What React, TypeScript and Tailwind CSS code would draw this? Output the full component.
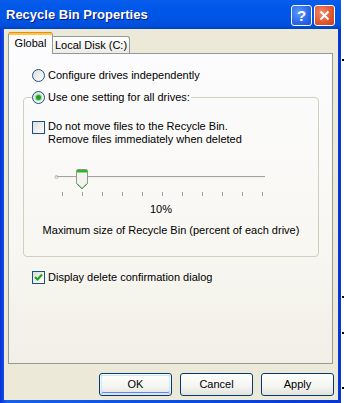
import React from 'react';

function Radio({ checked }: { checked?: boolean }) {
  return (
    <span className="w-[13px] h-[13px] rounded-full border border-[#1C5180] bg-[linear-gradient(135deg,#DCDCD7,#FFFFFF)] flex items-center justify-center shrink-0">
      {checked && <span className="w-[5px] h-[5px] rounded-full bg-[#21A121] shadow-[0_0_0_1px_#9ADF9A]" />}
    </span>
  );
}

function Check({ checked }: { checked?: boolean }) {
  return (
    <span className="w-[13px] h-[13px] border border-[#1C5180] bg-[linear-gradient(135deg,#DCDCD7,#FFFFFF)] flex items-center justify-center shrink-0">
      {checked && (
        <svg width="11" height="11" viewBox="0 0 11 11">
          <path d="M2 5 L4.5 7.5 L9 2.5" stroke="#21A121" strokeWidth="2" fill="none" />
        </svg>
      )}
    </span>
  );
}

function XpButton({ label, isDefault }: { label: string; isDefault?: boolean }) {
  return (
    <div className="w-[73px] h-[23px] rounded-[3px] border border-[#003C74] bg-[linear-gradient(180deg,#FFFFFF_0%,#F4F4F0_60%,#E3E2DA_100%)] p-[1px]">
      <div
        className={
          isDefault
            ? 'h-full rounded-[2px] shadow-[inset_0_0_0_1px_#CEE7FF,inset_0_-1px_0_1px_#6982EE] flex items-center justify-center'
            : 'h-full flex items-center justify-center'
        }
      >
        {label}
      </div>
    </div>
  );
}

export default function App() {
  const ticks = [0, 1, 2, 3, 4, 5, 6, 7, 8, 9, 10];

  return (
    <div className="w-[344px] h-[403px] flex bg-white text-[11px] leading-[13px] text-black font-['Liberation_Sans',Tahoma,Arial,sans-serif] overflow-hidden">
      {/* dialog */}
      <div className="w-[341px] h-full flex flex-col bg-[linear-gradient(90deg,#0831D9_0%,#1660EA_2%,#0A4FE0_50%,#0836D4_100%)]">
        {/* title bar */}
        <div className="h-[29px] flex items-center pl-[6px] pr-[6px] bg-[linear-gradient(180deg,#0A5DEB_0%,#0058E8_25%,#0055E5_65%,#0050DC_88%,#0042C2_100%)]">
          <span className="flex-1 text-white font-bold text-[13px] leading-[16px] [text-shadow:1px_1px_0_#0A1883]">
            Recycle Bin Properties
          </span>
          <div className="flex gap-[2px] mt-[1px]">
            <div className="w-[21px] h-[21px] rounded-[3px] border border-white bg-[radial-gradient(circle_at_35%_35%,#5A9CF8,#2A66E6_60%,#1A4FD6)] flex items-center justify-center text-white font-bold text-[15px] leading-none">
              ?
            </div>
            <div className="w-[21px] h-[21px] rounded-[3px] border border-white bg-[radial-gradient(circle_at_35%_35%,#F08A6A,#E0552E_60%,#C23F1B)] flex items-center justify-center">
              <svg width="11" height="11" viewBox="0 0 11 11">
                <path d="M1.5 1.5 L9.5 9.5 M9.5 1.5 L1.5 9.5" stroke="white" strokeWidth="2" />
              </svg>
            </div>
          </div>
        </div>

        {/* body */}
        <div className="flex-1 ml-[4px] mr-[3px] mb-[3px] bg-[#ECE9D8] flex flex-col">
          {/* tabs */}
          <div className="h-[24px] pl-[4px] flex items-end">
            <div className="relative z-10 -mb-[1px] w-[45px] h-[22px] rounded-t-[3px] border-x border-[#919B9C] bg-[#FCFCFE] flex flex-col">
              <div className="h-[1px] bg-[#E68B2C] rounded-t-[3px]" />
              <div className="h-[2px] bg-[#FFC73C]" />
              <div className="flex-1 flex items-center justify-center pb-[3px]">Global</div>
            </div>
            <div className="w-[77px] h-[17px] rounded-tr-[3px] border-t border-r border-[#919B9C] bg-[linear-gradient(180deg,#FFFFFF,#ECEBE6)] flex items-center justify-center pt-[1px]">
              Local Disk (C:)
            </div>
          </div>

          {/* panel */}
          <div className="ml-[4px] w-[325px] h-[311px] border border-[#919B9C] bg-[linear-gradient(180deg,#FCFCFE_0%,#F8F7F2_60%,#F1EFE6_100%)] pt-[15px]">
            <div className="ml-[23px] flex items-center gap-[3px] h-[13px]">
              <Radio />
              <span>Configure drives independently</span>
            </div>

            <fieldset className="ml-[14px] mt-[9px] w-[296px] border border-[#D0D0BF] rounded-[4px] p-0 pb-[19px]">
              <legend className="ml-[8px] pr-[1px]">
                <span className="flex items-center gap-[3px] h-[13px]">
                  <Radio checked />
                  <span>Use one setting for all drives:</span>
                </span>
              </legend>

              <div className="mt-[16px] ml-[8px] flex gap-[3px]">
                <div className="pt-[1px]">
                  <Check />
                </div>
                <div>
                  <div>Do not move files to the Recycle Bin.</div>
                  <div>Remove files immediately when deleted</div>
                </div>
              </div>

              <div className="mt-[20px] ml-[28px] w-[218px]">
                <svg width="218" height="32" viewBox="0 0 218 32" className="block">
                  <line x1="4.5" y1="10.5" x2="213" y2="10.5" stroke="#A3A29C" />
                  <line x1="5" y1="11.5" x2="213" y2="11.5" stroke="#F3F2EC" />
                  <circle cx="4.5" cy="11" r="1.5" fill="none" stroke="#B7B6B0" />
                  <path d="M24.5 5 Q24.5 3.5 26 3.5 H34 Q35.5 3.5 35.5 5 V17.5 L30 23 L24.5 17.5 Z" fill="#F4F3EE" stroke="#8A9A8A" />
                  <rect x="25" y="4" width="10" height="2" fill="#2FB32F" />
                  <rect x="25" y="6" width="10" height="1" fill="#8EDB8E" />
                  <path d="M25 17.5 L30 22.5 L35 17.5" fill="none" stroke="#3C9F3C" />
                  {ticks.map((t) => (
                    <line key={t} x1={10.5 + t * 20} y1="26" x2={10.5 + t * 20} y2="30" stroke="#A0A0A0" />
                  ))}
                </svg>
                <div className="mt-[5px] text-center">10%</div>
              </div>

              <div className="mt-[8px] text-center">Maximum size of Recycle Bin (percent of each drive)</div>
            </fieldset>

            <div className="mt-[14px] ml-[23px] flex items-center gap-[3px] h-[13px]">
              <Check checked />
              <span>Display delete confirmation dialog</span>
            </div>
          </div>

          {/* buttons */}
          <div className="mt-[9px] pr-[4px] flex justify-end gap-[8px]">
            <XpButton label="OK" isDefault />
            <XpButton label="Cancel" />
            <XpButton label="Apply" />
          </div>
        </div>
      </div>

      {/* background strip */}
      <div className="flex-1 flex flex-col items-end">
        <div className="h-[59px]" />
        <div className="w-[2px] h-[2px] bg-black" />
        <div className="h-[235px]" />
        <div className="w-[2px] h-[2px] bg-black" />
        <div className="h-[34px]" />
        <div className="w-[2px] h-[2px] bg-black" />
        <div className="h-[53px]" />
        <div className="w-[2px] h-[2px] bg-black" />
      </div>
    </div>
  );
}
